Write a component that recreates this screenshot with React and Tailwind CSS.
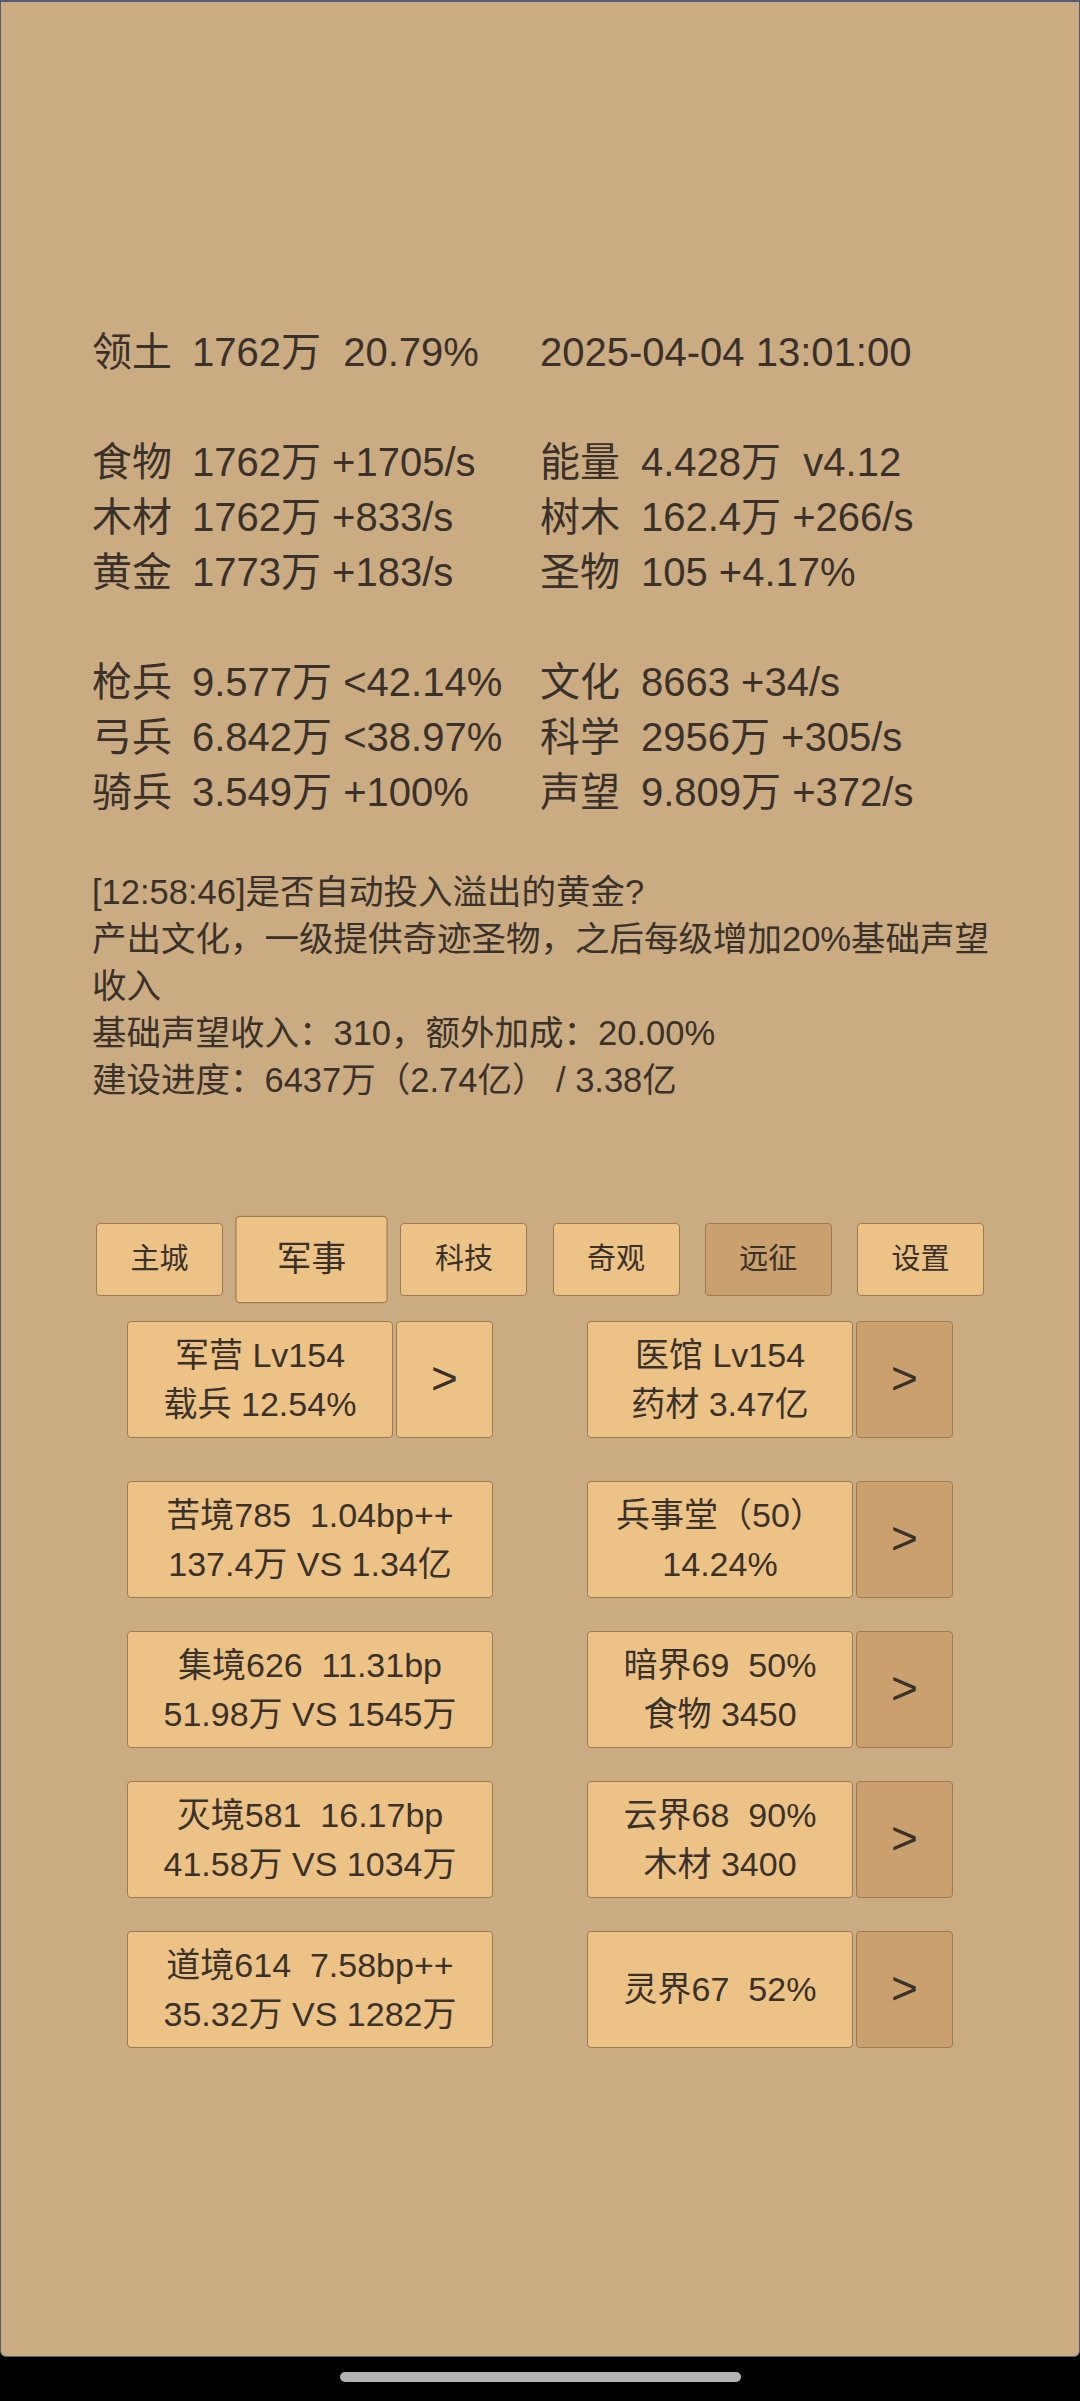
import React from "react";

const FONT = "font-['Liberation_Sans','Noto_Sans_CJK_SC',sans-serif]";

const rows = [
  { l: ["领土", "1762万  20.79%"], r: ["", "2025-04-04 13:01:00"] },
  null,
  { l: ["食物", "1762万 +1705/s"], r: ["能量", "4.428万  v4.12"] },
  { l: ["木材", "1762万 +833/s"], r: ["树木", "162.4万 +266/s"] },
  { l: ["黄金", "1773万 +183/s"], r: ["圣物", "105 +4.17%"] },
  null,
  { l: ["枪兵", "9.577万 <42.14%"], r: ["文化", "8663 +34/s"] },
  { l: ["弓兵", "6.842万 <38.97%"], r: ["科学", "2956万 +305/s"] },
  { l: ["骑兵", "3.549万 +100%"], r: ["声望", "9.809万 +372/s"] },
];

const tabs = [
  { t: "主城" },
  { t: "军事", big: true },
  { t: "科技" },
  { t: "奇观" },
  { t: "远征", dark: true },
  { t: "设置" },
];

const LIGHT = "bg-[#edc287]";
const DARK = "bg-[#c9a06e]";
const BORDER = "border-[1.5px] border-[#9c7b54] rounded-[4px]";

function Card({ lines, className = "" }) {
  return (
    <div
      className={`${LIGHT} ${BORDER} h-[117px] flex flex-col items-center justify-center text-center text-[34px] leading-[49px] whitespace-pre ${className}`}
    >
      {lines.map((s, i) => (
        <div key={i}>{s}</div>
      ))}
    </div>
  );
}

function Arrow({ dark }) {
  return (
    <div
      className={`${dark ? DARK : LIGHT} ${BORDER} w-[97px] h-[117px] flex items-center justify-center text-[46px] leading-none`}
    >
      <span className="-mt-[4px]">&gt;</span>
    </div>
  );
}

export default function App() {
  return (
    <div className={`w-[1080px] h-[2401px] bg-black overflow-hidden ${FONT} text-[#3a322a]`}>
      <div className="h-[2357px] bg-[#cbab82] border-t-2 border-x border-b border-[#565c75] rounded-b-[6px] flex flex-col">
        {/* stats block */}
        <div className="pt-[322px] pl-[91px] text-[40px]">
          {rows.map((row, i) =>
            row ? (
              <div key={i} className="flex h-[55px] items-center whitespace-pre">
                <div className="w-[448px] flex">
                  <span className="w-[100px]">{row.l[0]}</span>
                  <span>{row.l[1]}</span>
                </div>
                <div className="flex">
                  {row.r[0] ? <span className="w-[101px]">{row.r[0]}</span> : null}
                  <span>{row.r[1]}</span>
                </div>
              </div>
            ) : (
              <div key={i} className="h-[55px]" />
            )
          )}
        </div>

        {/* message block */}
        <div className="mt-[50px] ml-[91px] w-[930px] text-[34.5px] leading-[47px]">
          <div>[12:58:46]是否自动投入溢出的黄金?</div>
          <div>产出文化，一级提供奇迹圣物，之后每级增加20%基础声望收入</div>
          <div>基础声望收入：310，额外加成：20.00%</div>
          <div>建设进度：6437万（2.74亿） / 3.38亿</div>
        </div>

        {/* tabs */}
        <div className="mt-[119px] flex justify-center gap-[25.2px]">
          {tabs.map((t) => (
            <div
              key={t.t}
              className={`${t.dark ? DARK : LIGHT} ${BORDER} w-[127px] h-[73px] flex items-center justify-center text-[29px] ${
                t.big ? "scale-[1.2]" : ""
              }`}
            >
              {t.t}
            </div>
          ))}
        </div>

        {/* cards */}
        <div className="mt-[25px] flex flex-col">
          <div className="flex justify-center gap-[94px]">
            <div className="w-[366px] flex gap-[3px]">
              <Card className="w-[266px]" lines={["军营 Lv154", "载兵 12.54%"]} />
              <Arrow />
            </div>
            <div className="w-[366px] flex gap-[3px]">
              <Card className="w-[266px]" lines={["医馆 Lv154", "药材 3.47亿"]} />
              <Arrow dark />
            </div>
          </div>

          <div className="mt-[43px] flex flex-col gap-[33px]">
            {[
              [["苦境785  1.04bp++", "137.4万 VS 1.34亿"], ["兵事堂（50）", "14.24%"]],
              [["集境626  11.31bp", "51.98万 VS 1545万"], ["暗界69  50%", "食物 3450"]],
              [["灭境581  16.17bp", "41.58万 VS 1034万"], ["云界68  90%", "木材 3400"]],
              [["道境614  7.58bp++", "35.32万 VS 1282万"], ["灵界67  52%"]],
            ].map(([left, right], i) => (
              <div key={i} className="flex justify-center gap-[94px]">
                <Card className="w-[366px]" lines={left} />
                <div className="w-[366px] flex gap-[3px]">
                  <Card className="w-[266px]" lines={right} />
                  <Arrow dark />
                </div>
              </div>
            ))}
          </div>
        </div>
      </div>

      {/* navigation bar */}
      <div className="h-[44px] flex justify-center pt-[15px]">
        <div className="w-[401px] h-[10px] rounded-full bg-[#b3b3b3]" />
      </div>
    </div>
  );
}
